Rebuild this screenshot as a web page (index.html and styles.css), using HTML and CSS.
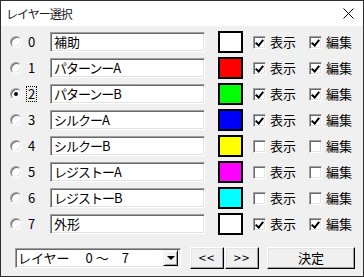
FILE: index.html
```html
<!DOCTYPE html>
<html lang="ja">

<head>
    <meta charset="UTF-8">
    <title>レイヤー選択</title>
    <link rel="stylesheet" href="styles.css">
</head>

<body>
    <div class="window">
        <div class="titlebar">
            <span class="title">レイヤー選択</span>
            <svg class="close" width="11" height="11" viewBox="0 0 11 11">
                <path d="M0.5 0.5L10.5 10.5M10.5 0.5L0.5 10.5" stroke="#000" stroke-width="1" fill="none" />
            </svg>
        </div>
        <div class="content">
            <div class="layers">
                <div class="layer">
                    <label class="pick"><span class="radio"></span><span class="num">0</span></label>
                    <div class="name">補助</div>
                    <div class="swatch white"></div>
                    <label class="check show"><span class="box on"></span>表示</label>
                    <label class="check"><span class="box on"></span>編集</label>
                </div>
                <div class="layer">
                    <label class="pick"><span class="radio"></span><span class="num">1</span></label>
                    <div class="name kana">パターンーA</div>
                    <div class="swatch red"></div>
                    <label class="check show"><span class="box on"></span>表示</label>
                    <label class="check"><span class="box on"></span>編集</label>
                </div>
                <div class="layer">
                    <label class="pick"><span class="radio on"></span><span class="num focus">2</span></label>
                    <div class="name kana">パターンーB</div>
                    <div class="swatch green"></div>
                    <label class="check show"><span class="box on"></span>表示</label>
                    <label class="check"><span class="box on"></span>編集</label>
                </div>
                <div class="layer">
                    <label class="pick"><span class="radio"></span><span class="num">3</span></label>
                    <div class="name kana">シルクーA</div>
                    <div class="swatch blue"></div>
                    <label class="check show"><span class="box on"></span>表示</label>
                    <label class="check"><span class="box on"></span>編集</label>
                </div>
                <div class="layer">
                    <label class="pick"><span class="radio"></span><span class="num">4</span></label>
                    <div class="name kana">シルクーB</div>
                    <div class="swatch yellow"></div>
                    <label class="check show"><span class="box"></span>表示</label>
                    <label class="check"><span class="box"></span>編集</label>
                </div>
                <div class="layer">
                    <label class="pick"><span class="radio"></span><span class="num">5</span></label>
                    <div class="name kana">レジストーA</div>
                    <div class="swatch magenta"></div>
                    <label class="check show"><span class="box"></span>表示</label>
                    <label class="check"><span class="box"></span>編集</label>
                </div>
                <div class="layer">
                    <label class="pick"><span class="radio"></span><span class="num">6</span></label>
                    <div class="name kana">レジストーB</div>
                    <div class="swatch cyan"></div>
                    <label class="check show"><span class="box"></span>表示</label>
                    <label class="check"><span class="box"></span>編集</label>
                </div>
                <div class="layer">
                    <label class="pick"><span class="radio"></span><span class="num">7</span></label>
                    <div class="name">外形</div>
                    <div class="swatch white"></div>
                    <label class="check show"><span class="box on"></span>表示</label>
                    <label class="check"><span class="box on"></span>編集</label>
                </div>
            </div>

            <div class="footer">
                <div class="combo">
                    <span class="combo-text">レイヤー　 0 ～　7</span>
                    <span class="drop"><span class="arrow"></span></span>
                </div>
                <div class="btn prev">&lt;&lt;</div>
                <div class="btn next">&gt;&gt;</div>
                <div class="btn ok">決定</div>
            </div>
        </div>
    </div>
</body>

</html>
```

FILE: styles.css
```css
* {
    margin: 0;
    padding: 0;
    box-sizing: border-box;
}

body {
    width: 364px;
    height: 277px;
    font-family: "Noto Sans CJK JP", sans-serif;
    font-size: 13px;
    color: #000;
}

.window {
    width: 364px;
    height: 277px;
    border: 1px solid #2e2e2e;
    background-color: #f0f0f0;
    display: flex;
    flex-direction: column;
}

.titlebar {
    height: 25px;
    background-color: #fff;
    display: flex;
    align-items: center;
    justify-content: space-between;
    padding: 0 9px 0 5px;
}

.title {
    font-size: 12px;
    letter-spacing: -1px;
    line-height: 14px;
    color: #1a1a1a;
}

.content {
    padding: 5px 0 0 9px;
}

.layers {
    display: flex;
    flex-direction: column;
    gap: 4px;
}

.layer {
    display: flex;
    align-items: center;
    height: 22px;
}

.pick {
    width: 40px;
    display: flex;
    align-items: center;
    gap: 5px;
}

/* 丸いラジオボタン */
.radio {
    position: relative;
    width: 12px;
    height: 12px;
    border-radius: 50%;
    background-color: #fff;
    border: 1px solid;
    border-color: #a0a0a0 #fff #fff #a0a0a0;
    box-shadow: inset 1px 1px 0 #696969, inset -1px -1px 0 #e3e3e3;
}

.radio.on::after {
    content: "";
    position: absolute;
    left: 3px;
    top: 3px;
    width: 4px;
    height: 4px;
    border-radius: 50%;
    background-color: #000;
}

.num {
    line-height: 14px;
    padding: 0 1px;
}

.num.focus {
    outline: 1px dotted #000;
}

.name {
    width: 155px;
    height: 20px;
    background-color: #fff;
    border: 1px solid;
    border-color: #a0a0a0 #fff #fff #a0a0a0;
    box-shadow: inset 1px 1px 0 #696969, inset -1px -1px 0 #e3e3e3;
    padding-left: 3px;
    line-height: 18px;
    white-space: nowrap;
}

/* カタカナは少し詰める */
.name.kana {
    letter-spacing: -1px;
}

.swatch {
    width: 25px;
    height: 22px;
    margin-left: 13px;
    border: 1px solid #000;
    box-shadow: inset 0 0 0 1px #000;
}

.white { background-color: #fff; }
.red { background-color: #ff0000; }
.green { background-color: #00ff00; }
.blue { background-color: #0000ff; }
.yellow { background-color: #ffff00; }
.magenta { background-color: #ff00ff; }
.cyan { background-color: #00ffff; }

.check {
    display: flex;
    align-items: center;
    gap: 4px;
    line-height: 16px;
}

.check.show {
    margin-left: 10px;
    width: 56px;
}

.box {
    position: relative;
    width: 13px;
    height: 13px;
    background-color: #fff;
    border: 1px solid;
    border-color: #a0a0a0 #fff #fff #a0a0a0;
    box-shadow: inset 1px 1px 0 #696969, inset -1px -1px 0 #e3e3e3;
}

/* チェックマーク */
.box.on::after {
    content: "";
    position: absolute;
    left: 3px;
    top: 1px;
    width: 3px;
    height: 6px;
    border: solid #000;
    border-width: 0 2px 2px 0;
    transform: rotate(40deg);
}

.footer {
    display: flex;
    align-items: center;
    height: 22px;
    margin-top: 12px;
}

.combo {
    width: 166px;
    height: 20px;
    margin-left: 5px;
    background-color: #fff;
    border: 1px solid;
    border-color: #a0a0a0 #fff #fff #a0a0a0;
    box-shadow: inset 1px 1px 0 #696969, inset -1px -1px 0 #e3e3e3;
    display: flex;
    align-items: center;
    justify-content: space-between;
    padding: 0 2px 0 2px;
    line-height: 16px;
    white-space: pre;
}

.drop {
    width: 15px;
    height: 16px;
    background-color: #f0f0f0;
    border: 1px solid;
    border-color: #f0f0f0 #000 #000 #f0f0f0;
    box-shadow: inset 1px 1px 0 #fff, inset -1px -1px 0 #a0a0a0;
    display: flex;
    align-items: center;
    justify-content: center;
}

.arrow {
    width: 0;
    height: 0;
    border-left: 4px solid transparent;
    border-right: 4px solid transparent;
    border-top: 4px solid #000;
}

.btn {
    height: 22px;
    background-color: #f0f0f0;
    border: 1px solid;
    border-color: #fff #000 #000 #fff;
    box-shadow: inset -1px -1px 0 #a0a0a0, inset 1px 1px 0 #e3e3e3;
    display: flex;
    align-items: center;
    justify-content: center;
    line-height: 16px;
}

.prev,
.next {
    width: 34px;
    letter-spacing: 1px;
}

.prev {
    margin-left: 9px;
}

.next {
    margin-left: 1px;
}

.ok {
    width: 88px;
    margin-left: 8px;
}
```
